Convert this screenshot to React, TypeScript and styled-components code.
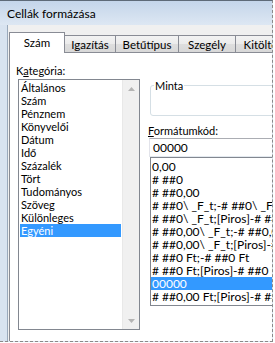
import styled, { createGlobalStyle } from 'styled-components'

const GlobalStyle = createGlobalStyle`
  html, body { margin: 0; padding: 0; background: #fff; }
  body {
    font-family: Lato, "Noto Sans", sans-serif;
    font-size: 11px;
    color: #000;
  }
  * { box-sizing: border-box; }
`

const categories = [
  'Általános', 'Szám', 'Pénznem', 'Könyvelői', 'Dátum', 'Idő',
  'Százalék', 'Tört', 'Tudományos', 'Szöveg', 'Különleges', 'Egyéni',
]

const formats = [
  '0,00',
  '# ##0',
  '# ##0,00',
  '# ##0\\ _F_t;-# ##0\\ _F_t',
  '# ##0\\ _F_t;[Piros]-# ##0\\ _F_t',
  '# ##0,00\\ _F_t;-# ##0,00\\ _F_t',
  '# ##0,00\\ _F_t;[Piros]-# ##0,00\\ _F_t',
  '# ##0 Ft;-# ##0 Ft',
  '# ##0 Ft;[Piros]-# ##0 Ft',
  '00000',
  '# ##0,00 Ft;[Piros]-# ##0,00 Ft',
]

const tabs = [
  { label: 'Szám', w: 56 },
  { label: 'Igazítás', w: 52 },
  { label: 'Betűtípus', w: 64 },
  { label: 'Szegély', w: 58 },
  { label: 'Kitöltés', w: 56 },
]

const Arrow = ({ down }: { down?: boolean }) => (
  <svg width="7" height="4" viewBox="0 0 7 4">
    <polygon points={down ? '0,0 7,0 3.5,4' : '0,4 7,4 3.5,0'} fill="#b4b4b4" />
  </svg>
)

const App = () => {
  return (
    <>
      <GlobalStyle />
      <Window>
        <TitleBar>Cellák formázása</TitleBar>
        <Client>
          <TabRow>
            {tabs.map((t, i) => (
              <Tab key={t.label} $active={i === 0} $w={t.w} $first={i === 0}>
                {t.label}
              </Tab>
            ))}
          </TabRow>
          <Panel>
            <LeftCol>
              <Label>K<u>a</u>tegória:</Label>
              <ListBox>
                <Items>
                  {categories.map((c) => (
                    <Item key={c} $selected={c === 'Egyéni'}>{c}</Item>
                  ))}
                </Items>
                <ScrollBar>
                  <ArrowButton><Arrow /></ArrowButton>
                  <ArrowButton><Arrow down /></ArrowButton>
                </ScrollBar>
              </ListBox>
            </LeftCol>
            <RightCol>
              <GroupBox>
                <Legend>Minta</Legend>
                <GroupBody />
              </GroupBox>
              <CodeLabel><u>F</u>ormátumkód:</CodeLabel>
              <TextBox>00000</TextBox>
              <FormatList>
                {formats.map((f) => (
                  <FormatItem key={f} $selected={f === '00000'}>{f}</FormatItem>
                ))}
              </FormatList>
            </RightCol>
          </Panel>
        </Client>
      </Window>
    </>
  )
}

export default App

const Window = styled.div`
  box-sizing: content-box;
  width: 272px;
  height: 340px;
  overflow: hidden;
  display: flex;
  flex-direction: column;
  background: #d8e3f0;
  border-top: 1px solid #5e6a78;
  border-right: 1px dashed #8a8a8a;
  border-bottom: 1px dashed #8a8a8a;
`

const TitleBar = styled.div`
  height: 24px;
  flex-shrink: 0;
  padding: 1px 0 0 7px;
  line-height: 24px;
  font-size: 12px;
  background: linear-gradient(to bottom, #c4d5ea 0%, #d3e0ef 60%, #dde7f3 100%);
`

const Client = styled.div`
  flex: 1;
  margin-left: 7px;
  border-left: 1px solid #9aa9bb;
  background: #f0f0f0;
  padding: 7px 0 0 1px;
  display: flex;
  flex-direction: column;
  min-height: 0;
`

const TabRow = styled.div`
  display: flex;
  align-items: flex-start;
  height: 21px;
  margin-bottom: -1px;
  position: relative;
  z-index: 1;
  flex-shrink: 0;
`

const Tab = styled.div<{ $active?: boolean; $w: number; $first?: boolean }>`
  flex-shrink: 0;
  width: ${(p) => p.$w}px;
  margin-left: ${(p) => (p.$first ? 0 : -1)}px;
  border: 1px solid #898c95;
  border-bottom: none;
  font-size: 11.5px;
  text-align: center;
  white-space: nowrap;
  margin-top: ${(p) => (p.$active ? 0 : 3)}px;
  height: ${(p) => (p.$active ? 21 : 17)}px;
  line-height: ${(p) => (p.$active ? 20 : 16)}px;
  padding-top: ${(p) => (p.$active ? 0 : 1)}px;
  background: ${(p) =>
    p.$active
      ? '#fff'
      : 'linear-gradient(to bottom, #f3f3f3 0%, #ebebeb 50%, #dedede 51%, #d8d8d8 100%)'};
`

const Panel = styled.div`
  flex: 1;
  display: flex;
  align-items: flex-start;
  background: #fff;
  border-left: 1px solid #898c95;
  border-top: 1px solid #898c95;
  padding-top: 11px;
`

const LeftCol = styled.div`
  flex-shrink: 0;
  padding-left: 6px;
`

const Label = styled.div`
  line-height: 13px;
  height: 13px;
`

const ListBox = styled.div`
  margin: 2px 0 0 2px;
  width: 122px;
  height: 251px;
  border: 1px solid #828790;
  display: flex;
`

const Items = styled.div`
  flex: 1;
  padding: 1px;
`

const Item = styled.div<{ $selected?: boolean }>`
  height: 13px;
  line-height: 13px;
  padding-left: 1px;
  white-space: nowrap;
  background: ${(p) => (p.$selected ? '#3399ff' : 'transparent')};
  color: ${(p) => (p.$selected ? '#fff' : '#000')};
`

const ScrollBar = styled.div`
  width: 17px;
  display: flex;
  flex-direction: column;
  justify-content: space-between;
  background: #f0f0f0;
  border-left: 1px solid #e8e8e8;
`

const ArrowButton = styled.div`
  height: 17px;
  display: flex;
  align-items: center;
  justify-content: center;
`

const RightCol = styled.div`
  flex-shrink: 0;
  width: 200px;
  margin: 15px 0 0 9px;
`

const GroupBox = styled.fieldset`
  margin: 0 0 0 1px;
  padding: 0 0 0 3px;
  border: 1px solid #d5dfe5;
  border-radius: 3px;
`

const Legend = styled.legend`
  padding: 0 1px;
  line-height: 13px;
`

const GroupBody = styled.div`
  height: 23px;
`

const CodeLabel = styled.div`
  margin: 8px 0 0 -1px;
  line-height: 13px;
  height: 13px;
`

const TextBox = styled.div`
  margin-top: 1px;
  height: 19px;
  line-height: 17px;
  padding-left: 3px;
  font-size: 12px;
  border: 1px solid #abadb3;
  border-left-color: #e2e3ea;
  border-right-color: #dbdfe6;
  border-bottom-color: #e3e9ef;
`

const FormatList = styled.div`
  margin-left: 1px;
  height: 149px;
  border: 1px solid #828790;
  padding: 2px 0 0 0;
  overflow: hidden;
  font-size: 12px;
`

const FormatItem = styled.div<{ $selected?: boolean }>`
  height: 13px;
  line-height: 13px;
  padding-left: 1px;
  white-space: nowrap;
  background: ${(p) => (p.$selected ? '#3399ff' : 'transparent')};
  color: ${(p) => (p.$selected ? '#fff' : '#000')};
`
